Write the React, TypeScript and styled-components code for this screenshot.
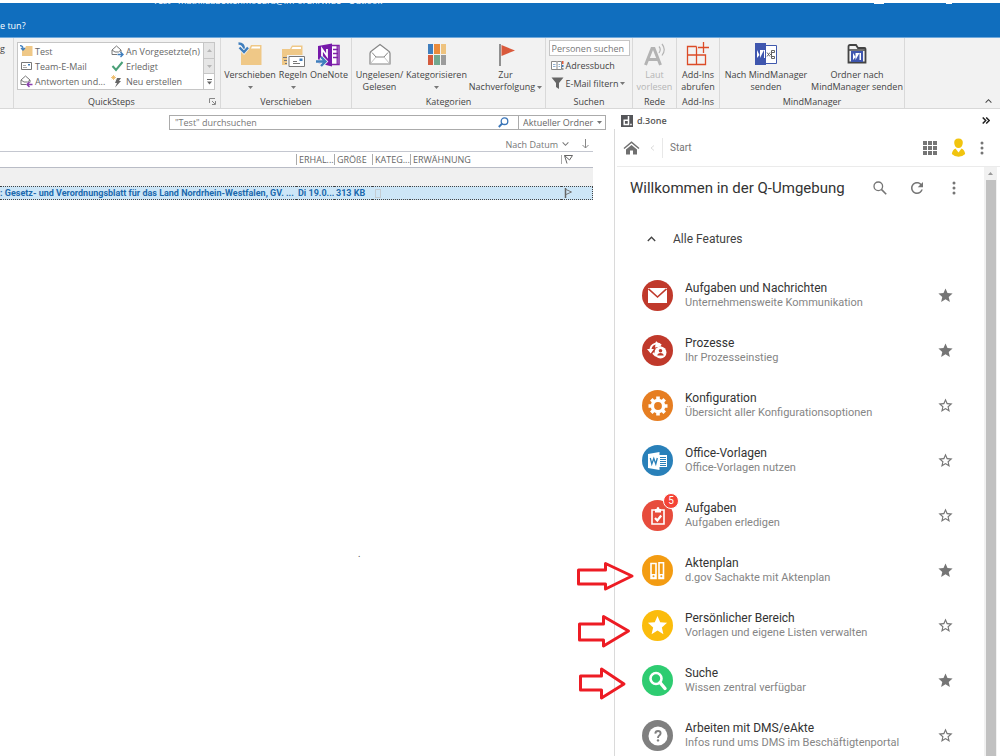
import React from "react";
import styled, { createGlobalStyle } from "styled-components";

const ui = `"Open Sans", "Noto Sans", sans-serif`;
const roboto = `Roboto, "Liberation Sans", sans-serif`;

const GlobalStyle = createGlobalStyle`
  *, *::before, *::after { box-sizing: border-box; }
  body { margin: 0; background: #fff; font-family: ${ui}; font-size: 9px; color: #444; overflow: hidden; }
  button, input, select { font: inherit; color: inherit; margin: 0; }
  button { padding: 0; border: 0; background: none; cursor: pointer; }
  svg { display: block; flex: none; }
`;

const Shell = styled.div`
  position: relative;
  display: flex;
  flex-direction: column;
  height: 100vh;
  overflow: hidden;
`;

/* ---------- title bar ---------- */
const TitleBar = styled.header`
  flex: none;
  height: 38px;
  background: linear-gradient(#fff 3px, #106ebe 3px);
  border-bottom: 1px solid #6fa9dc;
  color: #fff;
`;
const TitleClip = styled.div`
  display: flex;
  align-items: flex-end;
  height: 7px;
  padding-left: 153px;
  overflow: hidden;
  line-height: 12px;
  white-space: nowrap;
`;
const WindowButtons = styled.div`
  display: flex;
  gap: 62px;
  margin-left: auto;
  padding: 0 48px 3px 0;
`;
const WindowMark = styled.span<{ $w: number }>`
  width: ${(p) => p.$w}px;
  height: 1px;
  background: #fff;
`;
const TellMe = styled.div`
  margin-top: 12px;
  line-height: 14px;
`;

/* ---------- ribbon ---------- */
const Ribbon = styled.div`
  display: flex;
  flex: none;
  height: 71px;
  background: #f2f2f2;
  border-bottom: 1px solid #d8d8d8;
`;
const Group = styled.section<{ $w: number }>`
  display: flex;
  flex-direction: column;
  flex: none;
  width: ${(p) => p.$w}px;
  padding-top: 4px;
  border-right: 1px solid #d9d9d9;
`;
const GroupBody = styled.div`
  display: flex;
  flex: 1;
  justify-content: center;
`;
const GroupFoot = styled.div`
  display: flex;
  align-items: center;
  height: 13px;
  line-height: 13px;
  white-space: nowrap;
`;
const GroupLabel = styled.span`
  flex: 1;
  text-align: center;
`;
const Launcher = styled.button`
  display: flex;
  width: 11px;
`;
const BigButton = styled.button<{ $w: number; $off?: boolean }>`
  display: flex;
  flex-direction: column;
  align-items: center;
  flex: none;
  width: ${(p) => p.$w}px;
  line-height: 12px;
  white-space: nowrap;
  color: ${(p) => (p.$off ? "#b5b5b5" : "#444")};
  svg.big { height: 26px; margin-bottom: 1px; }
`;
const Line = styled.span`
  display: flex;
  align-items: center;
  justify-content: center;
  gap: 2px;
  height: 12px;
`;
const StubText = styled.div`
  line-height: 14px;
`;
const Steps = styled.div`
  display: flex;
  height: 48px;
  width: 198px;
  margin-right: 2px;
  background: #fff;
  border: 1px solid #c6c6c6;
`;
const StepGrid = styled.div`
  display: grid;
  flex: 1;
  grid-template-columns: 91px 1fr;
  grid-template-rows: repeat(3, 15px);
  padding: 1px 0 0 2px;
`;
const Step = styled.button`
  display: flex;
  align-items: center;
  gap: 2px;
  text-align: left;
  white-space: nowrap;
  color: #666;
`;
const StepScroll = styled.div`
  display: flex;
  flex-direction: column;
  width: 11px;
  border-left: 1px solid #c6c6c6;
`;
const StepArrow = styled.button<{ $off?: boolean }>`
  display: flex;
  flex: 1;
  align-items: center;
  justify-content: center;
  background: ${(p) => (p.$off ? "#e6e6e6" : "#fff")};
  & + & { border-top: 1px solid #c6c6c6; }
`;
const SearchGroup = styled.div`
  display: flex;
  flex-direction: column;
  width: 81px;
  margin-top: -2px;
`;
const PeopleInput = styled.input`
  width: 100%;
  height: 16px;
  padding: 0 2px;
  border: 1px solid #c6c6c6;
  background: #fff;
  outline: none;
  &::placeholder { color: #777; opacity: 1; }
`;
const SmallButton = styled.button`
  display: flex;
  align-items: center;
  gap: 2px;
  height: 18px;
  padding-left: 2px;
  white-space: nowrap;
`;
const Collapse = styled.button`
  display: flex;
  align-items: flex-end;
  margin-left: auto;
  padding: 0 8px 4px 0;
`;

/* ---------- mail list ---------- */
const Main = styled.main`
  display: flex;
  flex: 1;
  min-height: 0;
`;
const MailPane = styled.section`
  flex: 1;
  min-width: 0;
`;
const SearchRow = styled.div`
  display: flex;
  height: 15px;
  margin: 6px 8px 0 169px;
  border: 1px solid #ababab;
`;
const MailSearch = styled.input`
  flex: 1;
  min-width: 0;
  padding: 0 5px;
  border: 0;
  outline: none;
  background: transparent;
  &::placeholder { color: #777; opacity: 1; }
`;
const SearchIcon = styled.button`
  display: flex;
  align-items: center;
  width: 20px;
`;
const ScopeWrap = styled.label`
  display: flex;
  align-items: center;
  width: 87px;
  padding-right: 3px;
  border-left: 1px solid #ababab;
`;
const Scope = styled.select`
  flex: 1;
  appearance: none;
  height: 13px;
  padding: 0 0 0 4px;
  border: 0;
  outline: none;
  background: transparent;
  line-height: 13px;
  color: #666;
`;
const SortRow = styled.div`
  display: flex;
  justify-content: flex-end;
  align-items: center;
  gap: 13px;
  height: 14px;
  margin: 7px 25px 0 0;
  color: #777;
`;
const SortButton = styled.button`
  display: flex;
  align-items: center;
  gap: 4px;
`;
const MailTable = styled.table`
  width: calc(100% - 21px);
  border-collapse: separate;
  border-spacing: 0;
  table-layout: fixed;
  white-space: nowrap;
  th, td { padding: 0 0 0 2px; text-align: left; overflow: hidden; }
  th {
    height: 17px;
    border-top: 1px solid #c4c7d0;
    border-bottom: 1px solid #b9bcc6;
    line-height: 11px;
    font-weight: 400;
    color: #666;
  }
  td.band { height: 18px; background: #f0f0f0; }
  tr.selected td {
    height: 14px;
    border-top: 1px dotted #444;
    border-bottom: 1px dotted #444;
    background: #cde6f7;
    font-family: ${roboto};
    line-height: 12px;
    font-weight: 700;
    color: #1b69ad;
  }
  tr.selected td:last-child { border-right: 1px dotted #444; }
`;
const HeadCell = styled.span`
  display: block;
  margin-left: -2px;
  padding-left: 2px;
  border-left: 1px solid #aaa;
`;
const CategoryBox = styled.span`
  display: block;
  width: 6px;
  height: 9px;
  margin-left: 1px;
  border: 1px solid #c4ccd2;
`;
const Cropped = styled.span`
  display: block;
  margin-left: -2px;
`;
const Speck = styled.div`
  margin: 347px 0 0 358px;
  line-height: 14px;
`;

/* ---------- side pane ---------- */
const SidePane = styled.aside`
  display: flex;
  flex-direction: column;
  flex: none;
  width: 386px;
  font-family: ${roboto};
`;
const PaneTitle = styled.div`
  display: flex;
  align-items: center;
  gap: 4px;
  flex: none;
  height: 20px;
  padding: 3px 10px 0 7px;
  font: 600 9px/14px ${ui};
  color: #555;
  button { margin-left: auto; }
`;
const PaneBody = styled.div`
  display: flex;
  flex-direction: column;
  flex: 1;
  min-height: 0;
  padding-left: 2px;
  border-left: 1px solid #dadada;
`;
const NavBar = styled.nav`
  display: flex;
  align-items: center;
  flex: none;
  height: 38px;
  padding: 0 16px 0 6px;
  border-bottom: 1px solid #ebebeb;
  font-size: 10px;
`;
const Crumb = styled.a`
  margin-left: 6px;
  padding: 4px 0 4px 7px;
  border-left: 1px solid #e8e8e8;
  line-height: 12px;
  text-decoration: none;
  color: #757575;
`;
const NavTools = styled.div`
  display: flex;
  align-items: center;
  gap: 14px;
  margin-left: auto;
`;
const Viewport = styled.div`
  display: flex;
  flex: 1;
  min-height: 0;
  margin-right: 3px;
`;
const Scrollable = styled.div`
  flex: 1;
  min-width: 0;
  overflow: hidden;
`;
const Rail = styled.div`
  display: flex;
  flex-direction: column;
  align-items: center;
  flex: none;
  width: 13px;
  padding-top: 5px;
  background: #f1f1f1;
`;
const Thumb = styled.div`
  flex: 1;
  width: 10px;
  margin-top: 5px;
  background: #c1c1c1;
`;
const Heading = styled.div`
  display: flex;
  align-items: center;
  height: 42px;
  padding: 0 18px 0 13px;
`;
const H1 = styled.h1`
  margin: 0;
  font-size: 15px;
  line-height: 20px;
  font-weight: 400;
  white-space: nowrap;
  color: #333;
`;
const HeadTools = styled.div`
  display: flex;
  align-items: center;
  gap: 13px;
  margin-left: auto;
`;
const Section = styled.button`
  display: flex;
  align-items: center;
  gap: 17px;
  width: 100%;
  height: 59px;
  padding-left: 30px;
  font-size: 12px;
  color: #424242;
`;
const List = styled.ul`
  margin: 0;
  padding: 0;
  list-style: none;
`;
const Feature = styled.li`
  display: flex;
  align-items: center;
  height: 55px;
  padding: 0 30px 0 25px;
`;
const Disc = styled.span<{ $c: string }>`
  position: relative;
  display: flex;
  align-items: center;
  justify-content: center;
  flex: none;
  width: 31px;
  height: 31px;
  border-radius: 50%;
  background: ${(p) => p.$c};
`;
const Badge = styled.span`
  position: absolute;
  top: -7px;
  right: -6px;
  width: 16px;
  height: 16px;
  border: 1px solid #fff;
  border-radius: 50%;
  background: #f44336;
  font-size: 10px;
  line-height: 14px;
  text-align: center;
  color: #fff;
`;
const FeatureLink = styled.a`
  flex: 1;
  min-width: 0;
  margin-left: 12px;
  text-decoration: none;
  white-space: nowrap;
`;
const Name = styled.span`
  display: block;
  font-size: 12px;
  line-height: 14px;
  color: #333;
`;
const Hint = styled.span`
  display: block;
  font-size: 11px;
  line-height: 15px;
  color: #858585;
`;
const IconButton = styled.button<{ $w?: number }>`
  display: flex;
  justify-content: center;
  width: ${(p) => (p.$w ? `${p.$w}px` : "auto")};
`;

const Arrows = styled.svg`
  position: absolute;
  top: 555px;
  right: 360px;
  pointer-events: none;
`;

/* ---------- icons ---------- */
const Caret = ({ color = "#777", up = false }: { color?: string; up?: boolean }) => (
  <svg width="5" height="3" viewBox="0 0 5 3"><path d={up ? "M0 3h5L2.5 0z" : "M0 0h5L2.5 3z"} fill={color} /></svg>
);
const Chevron = ({ up = false, w = 9 }: { up?: boolean; w?: number }) => (
  <svg width={w} height="6" viewBox="0 0 9 6"><path d={up ? "M.8 5 4.5 1.2 8.2 5" : "M.8 1 4.5 4.8 8.2 1"} fill="none" stroke="currentColor" strokeWidth="1.3" /></svg>
);
const MoveIcon = () => (
  <svg className="big" width="26" viewBox="0 0 26 26"><path d="M4 7h8l2-4h10.500v20H4z" fill="#efc887" /><path d="M15 4.500h8v2h-9z" fill="#fff" /><path d="M1.500 1.500c4 0 5.500 2 5.500 6" fill="none" stroke="#3f7ebd" strokeWidth="2.400" /><path d="m2.500 5.500 4.500 4.500 4-4.500" fill="none" stroke="#f2f2f2" strokeWidth="4" /><path d="m2.500 5.500 4.500 4.500 4-4.500" fill="none" stroke="#3f7ebd" strokeWidth="2.400" /></svg>
);
const RulesIcon = () => (
  <svg className="big" width="26" viewBox="0 0 26 26"><path d="M2 7h8l2-3.500h10.500V23H2z" fill="#efc887" /><path d="M12.500 5h8.500v2H11.500z" fill="#fff" /><path d="M7 13h18v12H7z" fill="#f2f2f2" /><path d="M9 14.500h15.500v10H9z" fill="#fff" stroke="#777" /><path d="M19.500 16.500h3v2.500h-3z" fill="#3f7ebd" /><path d="M13 19.500h4M13 21.500h7M3 15.500h4M4 18.500h3M5 21.500h2" stroke="#777" /></svg>
);
const OneNoteIcon = () => (
  <svg className="big" width="26" viewBox="0 0 26 26"><path d="M15 3.500h8v19h-8z" fill="#fff" stroke="#8022a8" strokeWidth="1.500" /><path d="M17 7.500h5M17 11.500h5M17 15.500h5M21.200 3.500v19" stroke="#8022a8" strokeWidth="1.300" /><path d="m2 4 14-2.500v23L2 21z" fill="#7719aa" /><path d="M6 14V7l5 7V7" stroke="#fff" fill="none" strokeWidth="1.800" /><path d="M0 19.500h8.500M5 15l4.500 4.500L5 24" fill="none" stroke="#f2f2f2" strokeWidth="4" /><path d="M0 19.500h8.500M5 15l4.500 4.500L5 24" fill="none" stroke="#3f7ebd" strokeWidth="2.400" /></svg>
);
const OpenMailIcon = () => (
  <svg className="big" width="24" viewBox="0 0 24 26"><path d="M2 11.500Q2 10 3.500 9L12 2.500 20.500 9Q22 10 22 11.500V22H2z" fill="#fff" stroke="#868686" strokeWidth="1.200" /><path d="M4 10.500 8 15h8l4-4.500" fill="none" stroke="#868686" strokeWidth="1" /><path d="M2.500 21.500 8 15M21.500 21.500 16 15" fill="none" stroke="#c4c4c4" strokeWidth="1" /></svg>
);
const CategoryIcon = () => (
  <svg className="big" width="20" viewBox="0 0 20 26"><path d="M1 2h5v10H1z" fill="#3f7ebd" /><path d="M7 2h6v10H7z" fill="#ea8b3b" /><path d="M14 2h5v10h-5z" fill="#eec37f" /><path d="M1 13h5v10H1z" fill="#d35b3e" /><path d="M7 13h6v10H7z" fill="#72a890" /><path d="M14 13h5v10h-5z" fill="#9c9c9c" /></svg>
);
const FlagIcon = () => (
  <svg className="big" width="18" viewBox="0 0 18 26"><path d="M3 2v22" stroke="#777" strokeWidth="1.600" /><path d="M4.500 3v11L18 8.500z" fill="#d9593b" /></svg>
);
const SpeakIcon = () => (
  <svg className="big" width="24" viewBox="0 0 24 26"><path d="M2.500 23 9 6.500h2L17.500 23M5.500 17.500h9" fill="none" stroke="#b3b3b3" strokeWidth="3" /><path d="M16 4.500q2.500 3 0 6.500M19 2q4.500 5.500 0 11.500" fill="none" stroke="#b3b3b3" strokeWidth="1.200" /></svg>
);
const AddInIcon = () => (
  <svg className="big" width="24" viewBox="0 0 24 26"><path d="M10.500 4.500h-9v18h18v-9.500h-18M10.500 4.500v18M17.500 0v11M12 5.500h11" fill="none" stroke="#dc4b27" strokeWidth="1.300" /></svg>
);
const MindIcon = () => (
  <svg className="big" width="24" viewBox="0 0 24 26"><path d="M11 3.500h11.500v18H11z" fill="#fff" stroke="#4059ad" /><path d="M1 1h11v22H1z" fill="#3f56ae" /><path d="M3 8v8l2.500-3zM6 8v8l4-8v8h1V8z" fill="#fff" /><path d="m13 10.500 3 4m0-4-3 4M16 12.500h1.500M17.500 9v7" fill="none" stroke="#555" strokeWidth=".9" /><path d="M17.500 8.500h3v2h-3zM17.500 14.500h3v2h-3z" fill="#fff" stroke="#555" strokeWidth=".9" /></svg>
);
const MindFolderIcon = () => (
  <svg className="big" width="20" viewBox="0 0 20 26"><path d="M1.500 4.500q0-1.500 1.500-1.500h6l2 3h6.500q1 0 1 1v13.500H1.500z" fill="#f2f2f2" stroke="#444" strokeWidth="1.800" /><path d="M1 8h18" stroke="#444" strokeWidth="1.500" /><path d="M4 9h12v11H4z" fill="#3f56ae" /><path d="M6 11v7l2.500-3zM8.500 11v7l4-7v7H14v-7z" fill="#fff" /></svg>
);
const FolderSmall = () => (
  <svg width="13" height="13" viewBox="0 0 13 13"><path d="M2 3h3l1-2h6.500v10H2z" fill="#efc887" /><path d="M0 .7q3 0 3 3M1 3l2 2 2-2" fill="none" stroke="#3f7ebd" strokeWidth="1.300" /></svg>
);
const CardSmall = () => (
  <svg width="13" height="13" viewBox="0 0 13 13"><path d="M1.500 2.500h10v7h-10z" fill="#fff" stroke="#777" /><path d="M8 4h2v1.500H8z" fill="#3f7ebd" /><path d="M3 5.500h3M3 7.500h4" stroke="#aaa" /></svg>
);
const ReplySmall = ({ c, back = false }: { c: string; back?: boolean }) => (
  <svg width="13" height="13" viewBox="0 0 13 13"><path d="M6 9.500H1V5l4.500-4L10 5v2.500M1 5l3 2h3.500L10 5" fill="none" stroke="#777" /><path d={back ? "M12.500 9.500H7M9.500 7 7 9.500 9.500 12" : "M6.500 9.500H12M9.500 7 12 9.500 9.500 12"} fill="none" stroke={c} strokeWidth="1.400" /></svg>
);
const CheckSmall = () => (
  <svg width="13" height="13" viewBox="0 0 13 13"><path d="m1.500 6 3.500 4L11.500 2" fill="none" stroke="#4aa078" strokeWidth="2" /></svg>
);
const BoltSmall = () => (
  <svg width="13" height="13" viewBox="0 0 13 13"><path d="M6 3h4L8 6h2L4 12.500 6 8H4z" fill="#666" /><path d="M2.500 0v5M0 2.500h5M.8.8l3.400 3.400M4.200.8.8 4.200" stroke="#ecb65e" strokeWidth=".8" /></svg>
);
const BookIcon = () => (
  <svg width="13" height="11" viewBox="0 0 13 11"><path d="M.5 1.500h5l.5 1 .5-1h4v8H.5zM6 2.500v7" fill="#fff" stroke="#888" /><path d="M2 4.500h2.500M2 6.500h2.500M7.500 4.500H9M7.500 6.500H9" stroke="#8fb0d2" /><path d="M11 1h1.500v3H11z" fill="#e25b3b" /><path d="M11 5h1.500v2H11z" fill="#3f7ebd" /><path d="M11 8h1.500v2H11z" fill="#999" /></svg>
);
const FunnelIcon = () => (
  <svg width="13" height="12" viewBox="0 0 13 12"><path d="M.5.500h12L8 6v6L5 10V6z" fill="#666" /></svg>
);
const Magnify = () => (
  <svg width="14" height="14" viewBox="0 0 14 14"><circle cx="5.300" cy="5.300" r="4.300" fill="none" stroke="#757575" strokeWidth="1.300" /><path d="m8.400 8.400 4.800 4.800" stroke="#757575" strokeWidth="1.600" /></svg>
);
const Kebab = () => (
  <svg width="4" height="14" viewBox="0 0 4 14" fill="#757575"><circle cx="2" cy="2" r="1.500" /><circle cx="2" cy="7" r="1.500" /><circle cx="2" cy="12" r="1.500" /></svg>
);
const STAR = "M12 17.270 18.180 21l-1.640-7.030L22 9.240l-7.190-.61L12 2 9.190 8.630 2 9.240l5.460 4.730L5.820 21z";
const Star = ({ on }: { on: boolean }) => (
  <svg width="17" height="17" viewBox="0 0 24 24"><path fill="#757575" d={on ? STAR : "M22 9.240l-7.190-.62L12 2 9.190 8.630 2 9.240l5.460 4.730L5.820 21 12 17.270 18.180 21l-1.630-7.030L22 9.240zM12 15.400l-3.760 2.270 1-4.280-3.320-2.880 4.380-.38L12 6.100l1.710 4.040 4.380.38-3.320 2.880 1 4.280L12 15.400z"} /></svg>
);

const glyphs: Record<string, React.ReactNode> = {
  mail: <svg width="19" height="15" viewBox="0 0 19 15"><path d="M0 0h19v15H0z" fill="#fff" /><path d="m.5.800 9 8.200 9-8.200" fill="none" stroke="#c0392b" strokeWidth="1.600" /></svg>,
  process: <svg width="21" height="19" viewBox="0 0 21 19"><path d="M3.500 10Q3 4 8.500 2.600q3.500-.6 5.500 1.800" fill="none" stroke="#fff" strokeWidth="2" /><path d="M0 8h7l-3.300 4.500zM9 0l5.500 5.500L8 6.500z" fill="#fff" /><path d="m6 12 3 3" stroke="#fff" strokeWidth="2" /><circle cx="13.500" cy="11.500" r="6" fill="#fff" /><circle cx="13.500" cy="9.800" r="1.800" fill="#c0392b" /><path d="M10.300 14.500q.2-2.500 3.200-2.500t3.200 2.500z" fill="#c0392b" /></svg>,
  gear: <svg width="20" height="20" viewBox="0 0 20 20"><circle cx="10" cy="10" r="5.600" fill="none" stroke="#fff" strokeWidth="3.400" /><g stroke="#fff" strokeWidth="3.600"><path d="M10 .5v3M10 16.500v3M.5 10h3M16.500 10h3M3.300 3.300l2.100 2.100M14.600 14.600l2.100 2.100M3.300 16.700l2.100-2.100M14.600 5.400l2.100-2.100" /></g></svg>,
  word: <svg width="20" height="18" viewBox="0 0 20 18"><path d="M10 3h9v12h-9z" fill="#fff" /><path d="M12 5.500h6M12 7.500h6M12 9.500h6M12 11.500h6M12 13.500h6" stroke="#2980b9" /><path d="M0 2 11.500 0v18L0 16z" fill="#fff" /><path d="m2.300 6 1.500 6 2-5.500 2 5.500 1.500-6" fill="none" stroke="#2980b9" strokeWidth="1.300" /></svg>,
  task: <svg width="14" height="18" viewBox="0 0 14 18"><path d="M1 3h12v14H1z" fill="none" stroke="#fff" strokeWidth="1.600" /><path d="M4 2h1.500q.2-2 1.500-2t1.500 2H10v3.500H4z" fill="#fff" /><path d="m4 11 2.300 2.500L10.200 8.500" fill="none" stroke="#fff" strokeWidth="2.200" /></svg>,
  binder: <svg width="15" height="18" viewBox="0 0 15 18"><g fill="none" stroke="#fff" strokeWidth="1.600"><path d="M1 1.500h5v15H1zM9 .8h4.500v15.700H9z" /></g><path d="M1 12h5v5H1zM9 12h5v5H9z" fill="#fff" /><circle cx="3.500" cy="14.200" r="1" fill="#f39c12" /><circle cx="11.300" cy="14.200" r="1" fill="#f39c12" /></svg>,
  star: <svg width="23" height="23" viewBox="0 0 24 24"><path d={STAR} fill="#fff" /></svg>,
  search: <svg width="20" height="20" viewBox="0 0 20 20"><circle cx="8" cy="7.500" r="5.500" fill="none" stroke="#fff" strokeWidth="2.600" /><path d="m12 11.500 5 6" stroke="#fff" strokeWidth="3.400" strokeLinecap="round" /></svg>,
  help: <svg width="20" height="20" viewBox="0 0 20 20"><circle cx="10" cy="10" r="9.500" fill="#fff" /><path d="M7.300 7.600Q7.500 5 10 5t2.600 2.300Q12.600 8.700 11 9.700 10 10.300 10 12" fill="none" stroke="#7f7f7f" strokeWidth="1.900" /><circle cx="10" cy="14.400" r="1.200" fill="#7f7f7f" /></svg>,
};

const features = [
  { icon: "mail", color: "#c0392b", name: "Aufgaben und Nachrichten", hint: "Unternehmensweite Kommunikation", on: true },
  { icon: "process", color: "#c0392b", name: "Prozesse", hint: "Ihr Prozesseinstieg", on: true },
  { icon: "gear", color: "#e67e22", name: "Konfiguration", hint: "Übersicht aller Konfigurationsoptionen", on: false },
  { icon: "word", color: "#2980b9", name: "Office-Vorlagen", hint: "Office-Vorlagen nutzen", on: false },
  { icon: "task", color: "#e74c3c", name: "Aufgaben", hint: "Aufgaben erledigen", on: false, badge: 5 },
  { icon: "binder", color: "#f39c12", name: "Aktenplan", hint: "d.gov Sachakte mit Aktenplan", on: true },
  { icon: "star", color: "#fbbc0c", name: "Persönlicher Bereich", hint: "Vorlagen und eigene Listen verwalten", on: false },
  { icon: "search", color: "#2ecc71", name: "Suche", hint: "Wissen zentral verfügbar", on: true },
  { icon: "help", color: "#7f7f7f", name: "Arbeiten mit DMS/eAkte", hint: "Infos rund ums DMS im Beschäftigtenportal", on: false },
];

export default function App() {
  return (
    <Shell>
      <GlobalStyle />
      <TitleBar>
        <TitleClip>
          <span>Test - mathildabettenmoedra@im-ordnrw.de - Outlook</span>
          <WindowButtons><WindowMark $w={10} /><WindowMark $w={6} /></WindowButtons>
        </TitleClip>
        <TellMe>e tun?</TellMe>
      </TitleBar>

      <Ribbon>
        <Group $w={14}><StubText>g</StubText></Group>
        <Group $w={207}>
          <GroupBody>
            <Steps>
              <StepGrid>
                <Step><FolderSmall />Test</Step>
                <Step><ReplySmall c="#3f7ebd" />An Vorgesetzte(n)</Step>
                <Step><CardSmall />Team-E-Mail</Step>
                <Step><CheckSmall />Erledigt</Step>
                <Step><ReplySmall c="#8a3fae" back />Antworten und...</Step>
                <Step><BoltSmall />Neu erstellen</Step>
              </StepGrid>
              <StepScroll>
                <StepArrow $off aria-label="Nach oben"><Caret up color="#b5b5b5" /></StepArrow>
                <StepArrow $off aria-label="Nach unten"><Caret color="#b5b5b5" /></StepArrow>
                <StepArrow aria-label="Mehr"><svg width="5" height="6" viewBox="0 0 5 6"><path d="M0 .5h5" stroke="#666" /><path d="M0 2.500h5L2.500 5.500z" fill="#666" /></svg></StepArrow>
              </StepScroll>
            </Steps>
          </GroupBody>
          <GroupFoot>
            <GroupLabel>QuickSteps</GroupLabel>
            <Launcher aria-label="QuickSteps verwalten"><svg width="7" height="7" viewBox="0 0 7 7"><path d="M.5 5V.5H6M3 3l3 3M6.500 3v3.500H3" fill="none" stroke="#888" /></svg></Launcher>
          </GroupFoot>
        </Group>
        <Group $w={131}>
          <GroupBody>
            <BigButton $w={54}><MoveIcon /><Line>Verschieben</Line><Line><Caret /></Line></BigButton>
            <BigButton $w={32}><RulesIcon /><Line>Regeln</Line><Line><Caret /></Line></BigButton>
            <BigButton $w={40}><OneNoteIcon /><Line>OneNote</Line></BigButton>
          </GroupBody>
          <GroupFoot><GroupLabel>Verschieben</GroupLabel></GroupFoot>
        </Group>
        <Group $w={194}>
          <GroupBody>
            <BigButton $w={52}><OpenMailIcon /><Line>Ungelesen/</Line><Line>Gelesen</Line></BigButton>
            <BigButton $w={62}><CategoryIcon /><Line>Kategorisieren</Line><Line><Caret /></Line></BigButton>
            <BigButton $w={76}><FlagIcon /><Line>Zur</Line><Line>Nachverfolgung<Caret /></Line></BigButton>
          </GroupBody>
          <GroupFoot><GroupLabel>Kategorien</GroupLabel></GroupFoot>
        </Group>
        <Group $w={87}>
          <GroupBody>
            <SearchGroup>
              <PeopleInput aria-label="Personen suchen" placeholder="Personen suchen" />
              <SmallButton><BookIcon />Adressbuch</SmallButton>
              <SmallButton><FunnelIcon />E-Mail filtern<Caret /></SmallButton>
            </SearchGroup>
          </GroupBody>
          <GroupFoot><GroupLabel>Suchen</GroupLabel></GroupFoot>
        </Group>
        <Group $w={44}>
          <GroupBody><BigButton $w={42} $off><SpeakIcon /><Line>Laut</Line><Line>vorlesen</Line></BigButton></GroupBody>
          <GroupFoot><GroupLabel>Rede</GroupLabel></GroupFoot>
        </Group>
        <Group $w={43}>
          <GroupBody><BigButton $w={42}><AddInIcon /><Line>Add-Ins</Line><Line>abrufen</Line></BigButton></GroupBody>
          <GroupFoot><GroupLabel>Add-Ins</GroupLabel></GroupFoot>
        </Group>
        <Group $w={185}>
          <GroupBody>
            <BigButton $w={90}><MindIcon /><Line>Nach MindManager</Line><Line>senden</Line></BigButton>
            <BigButton $w={92}><MindFolderIcon /><Line>Ordner nach</Line><Line>MindManager senden</Line></BigButton>
          </GroupBody>
          <GroupFoot><GroupLabel>MindManager</GroupLabel></GroupFoot>
        </Group>
        <Collapse aria-label="Menüband reduzieren"><Chevron up w={7} /></Collapse>
      </Ribbon>

      <Main>
        <MailPane>
          <SearchRow>
            <MailSearch aria-label="Suche" placeholder={"\"Test\" durchsuchen"} />
            <SearchIcon aria-label="Suchen"><svg width="11" height="11" viewBox="0 0 11 11"><circle cx="6.500" cy="4.200" r="3.300" fill="none" stroke="#3a75b8" strokeWidth="1.300" /><path d="M4.200 6.500.800 10" stroke="#3a75b8" strokeWidth="1.800" /></svg></SearchIcon>
            <ScopeWrap>
              <Scope aria-label="Suchbereich"><option>Aktueller Ordner</option></Scope>
              <Caret />
            </ScopeWrap>
          </SearchRow>
          <SortRow>
            <SortButton>Nach Datum<Chevron w={7} /></SortButton>
            <IconButton aria-label="Reihenfolge umkehren"><svg width="7" height="10" viewBox="0 0 7 10"><path d="M3.500 0v9M.5 6l3 3 3-3" fill="none" stroke="#888" /></svg></IconButton>
          </SortRow>
          <MailTable>
            <colgroup>
              <col /><col width="38" /><col width="38" /><col width="38" /><col width="151" /><col width="32" />
            </colgroup>
            <thead>
              <tr>
                <th aria-label="Betreff" />
                <th><HeadCell>ERHAL...</HeadCell></th>
                <th><HeadCell>GRÖßE</HeadCell></th>
                <th><HeadCell>KATEG...</HeadCell></th>
                <th><HeadCell>ERWÄHNUNG</HeadCell></th>
                <th><HeadCell><svg width="9" height="9" viewBox="0 0 9 9"><path d="M.5.500h8L5.500 5 .5.500 3 8.500" fill="none" stroke="#666" /></svg></HeadCell></th>
              </tr>
            </thead>
            <tbody>
              <tr><td className="band" colSpan={6} /></tr>
              <tr className="selected">
                <td><Cropped>: Gesetz- und Verordnungsblatt für das Land Nordrhein-Westfalen, GV. ...</Cropped></td>
                <td>Di 19.0...</td>
                <td>313 KB</td>
                <td><CategoryBox /></td>
                <td />
                <td><svg width="10" height="10" viewBox="0 0 10 10"><path d="M2.500 0v10" stroke="#666" strokeWidth="1.500" /><path d="M3 1.500 8.500 4 3 6.500" fill="none" stroke="#777" /></svg></td>
              </tr>
            </tbody>
          </MailTable>
          <Speck>.</Speck>
        </MailPane>

        <SidePane>
          <PaneTitle>
            <svg width="12" height="12" viewBox="0 0 12 12"><path d="M0 0h12v12H0z" fill="#55565a" /><path d="M7.500 1v8.500H3.200V5.200h4.300" fill="none" stroke="#fff" strokeWidth="1.500" /><path d="M9.200 8.700h1.500v1.500H9.200z" fill="#fff" /></svg>
            d.3one
            <IconButton aria-label="Bereich ausblenden"><svg width="8" height="7" viewBox="0 0 8 7"><path d="m.7.500 3 3-3 3M4.200.500l3 3-3 3" fill="none" stroke="#222" strokeWidth="1.500" /></svg></IconButton>
          </PaneTitle>
          <PaneBody>
            <NavBar>
              <IconButton aria-label="Startseite"><svg width="17" height="14" viewBox="0 0 17 14"><path d="M1 7.500 8.500 1.200 16 7.500" fill="none" stroke="#707070" strokeWidth="1.500" /><path d="M3 8.500 8.500 4 14 8.500v5h-4V9.500H7v4H3z" fill="#707070" /></svg></IconButton>
              <svg width="16" height="8" viewBox="0 0 16 8"><path d="m14 1.500-3 2.500 3 2.500" fill="none" stroke="#ddd" /></svg>
              <Crumb href="#start">Start</Crumb>
              <NavTools>
                <IconButton aria-label="Apps"><svg width="14" height="14" viewBox="0 0 14 14" fill="#757575">{[0, 5, 10].map((y) => [0, 5, 10].map((x) => <rect key={`${x}-${y}`} x={x} y={y} width="4" height="4" />))}</svg></IconButton>
                <IconButton aria-label="Profil"><svg width="15" height="19" viewBox="0 0 15 19" fill="#f1c40f"><path d="M7.500.500Q12 .5 11.800 5 11.300 10 7.500 10T3.200 5Q3 .5 7.500.500z" /><path d="m4.500 10.500 3 4 3-4q3 1 3.700 5.500-2.700 2.700-6.700 2.700T.800 16q.7-4.500 3.700-5.500z" /></svg></IconButton>
                <IconButton aria-label="Menü"><Kebab /></IconButton>
              </NavTools>
            </NavBar>
            <Viewport>
              <Scrollable>
                <Heading>
                  <H1>Willkommen in der Q-Umgebung</H1>
                  <HeadTools>
                    <IconButton $w={24} aria-label="Suchen"><Magnify /></IconButton>
                    <IconButton $w={24} aria-label="Aktualisieren"><svg width="18" height="18" viewBox="0 0 24 24"><path fill="#757575" d="M17.650 6.350C16.200 4.900 14.210 4 12 4c-4.420 0-7.990 3.580-7.990 8s3.570 8 7.990 8c3.730 0 6.840-2.550 7.730-6h-2.080c-.82 2.330-3.040 4-5.650 4-3.310 0-6-2.690-6-6s2.690-6 6-6c1.660 0 3.140.69 4.220 1.780L13 11h7V4l-2.350 2.350z" /></svg></IconButton>
                    <IconButton $w={24} aria-label="Mehr"><Kebab /></IconButton>
                  </HeadTools>
                </Heading>
                <Section><Chevron up />Alle Features</Section>
                <List>
                  {features.map((f) => (
                    <Feature key={f.name}>
                      <Disc $c={f.color}>{glyphs[f.icon]}{f.badge && <Badge>{f.badge}</Badge>}</Disc>
                      <FeatureLink href="#feature"><Name>{f.name}</Name><Hint>{f.hint}</Hint></FeatureLink>
                      <IconButton aria-label="Favorit"><Star on={f.on} /></IconButton>
                    </Feature>
                  ))}
                </List>
              </Scrollable>
              <Rail>
                <Caret up color="#999" />
                <Thumb />
              </Rail>
            </Viewport>
          </PaneBody>
        </SidePane>
      </Main>

      <Arrows width="65" height="150" viewBox="575 555 65 150">
        <g fill="none" stroke="#ed1c24" strokeWidth="3" strokeLinejoin="round">
          <path d="M578.500 570H605.500V563.500L632 576 605.500 589V584H578.500z" />
          <path d="M579.500 624H603.500V616.500L628.500 631 603.500 646V640H579.500z" />
          <path d="M580.500 676H601.500V669L624 684 601.500 698V690H580.500z" />
        </g>
      </Arrows>
    </Shell>
  );
}
